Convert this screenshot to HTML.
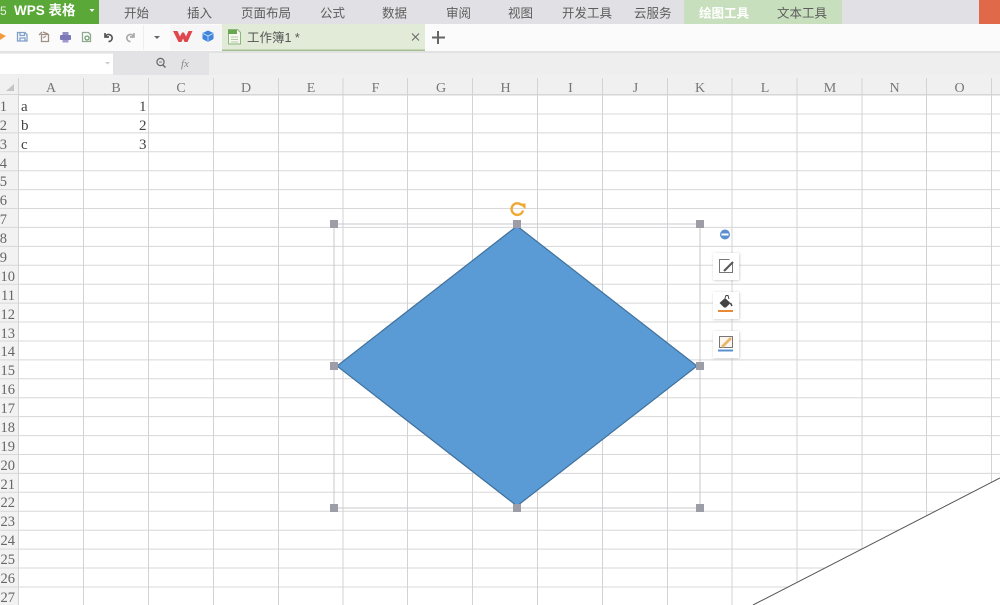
<!DOCTYPE html>
<html>
<head>
<meta charset="utf-8">
<style>
html,body{margin:0;padding:0;background:#fff;width:1000px;height:605px;overflow:hidden}
svg{display:block;filter:blur(.3px)}
.cn{font-family:"Liberation Sans","Noto Sans CJK SC",sans-serif;font-size:12.5px;fill:#5c5c5c}
.h{font-family:"Liberation Serif",serif;font-size:14px;fill:#777;text-anchor:middle}
.c{font-family:"Liberation Serif",serif;font-size:15px;fill:#444}
.r{font-family:"Liberation Serif",serif;font-size:14.5px;fill:#666;text-anchor:end}
</style>
</head>
<body>
<svg width="1000" height="605" viewBox="0 0 1000 605" xmlns="http://www.w3.org/2000/svg">
<defs>
<filter id="sh" x="-30%" y="-30%" width="160%" height="160%"><feDropShadow dx="0.500" dy="0.500" stdDeviation="1.300" flood-color="#000" flood-opacity=".22"/></filter>
</defs>
<rect width="1000" height="605" fill="#fff"/>
<!-- top bar -->
<rect width="1000" height="24" fill="#e1e1e5"/>
<rect width="99" height="24" fill="#5aa838"/>
<text x="0" y="15" font-family="Liberation Sans,sans-serif" font-size="12" fill="#e8f3e0">5</text>
<text x="14" y="15" font-family="Liberation Sans,'Noto Sans CJK SC',sans-serif" font-size="13.500" font-weight="bold" fill="#fff">WPS 表格</text>
<path d="M89.500 9h5l-2.500 3z" fill="#fff"/>
<rect x="684" y="0" width="158" height="24" fill="#c8dfbd"/>
<rect x="979" y="0" width="21" height="24" fill="#e0694a"/>
<g class="cn">
<text x="124" y="17.500">开始</text>
<text x="187" y="17.500">插入</text>
<text x="241" y="17.500">页面布局</text>
<text x="320" y="17.500">公式</text>
<text x="382" y="17.500">数据</text>
<text x="446" y="17.500">审阅</text>
<text x="508" y="17.500">视图</text>
<text x="562" y="17.500">开发工具</text>
<text x="634" y="17.500">云服务</text>
<text x="699" y="17.500" style="fill:#fff;font-weight:bold">绘图工具</text>
<text x="777" y="17.500">文本工具</text>
</g>
<!-- toolbar -->
<rect y="24" width="1000" height="27" fill="#fbfbfb"/>
<rect y="51" width="1000" height="2" fill="#e2e2e2"/>
<rect x="143" y="25" width="1" height="25" fill="#eee"/>
<rect x="170" y="25" width="52" height="25" fill="#f6f6f6"/>
<path d="M0 33l6 3-6 4z" fill="#f39a3c"/>
<g fill="none" stroke-width="1.300">
<path d="M17.500 32.500h7.500l2 2v6.500h-9.500z" stroke="#7d9fc9"/><path d="M20 32.500v3h4.500v-3M20 41v-3h5v3" stroke="#7d9fc9"/>
<path d="M41.500 34.500h7v7h-7zM39 35l3-3M43 32l5 2" stroke="#a08f88"/><path d="M43 38l3-2" stroke="#b09a90"/>
<path d="M82.500 32.500h6l2 2v7h-8z" stroke="#92a892"/><circle cx="87" cy="38" r="2" stroke="#6f9f70"/>
</g>
<rect x="60" y="35" width="11" height="5" rx="1" fill="#7c78b8"/><rect x="62.500" y="32" width="6" height="3" fill="#8f8cc4"/><rect x="62.500" y="40" width="6" height="2.500" fill="#9d9ad0"/>
<path d="M105 33v4h4M105.500 36.500a3.500 3.500 0 1 1 3 5" fill="none" stroke="#555" stroke-width="1.700"/>
<path d="M134 33v4h-4M133.500 36.500a3.500 3.500 0 1 0-3 5" fill="none" stroke="#aaa" stroke-width="1.700"/>
<path d="M154 36h6l-3 3z" fill="#666"/>
<path d="M173 31h4.500l2.500 5.500 2-4h2l2 4 2.500-5.500h4l-5 11h-3l-1.500-3.500-1.500 3.500h-3z" fill="#e0474c"/>
<path d="M208 30.500l5.500 2.500v6l-5.500 3-5.500-3v-6z" fill="#3f86dc"/><path d="M203 33.500l5 2.500 5-2.500M208 36v5.500" stroke="#d5e6f8" stroke-width=".8" fill="none"/>
<!-- tab -->
<rect x="222" y="24" width="203" height="26" fill="#e1ebd8"/>
<rect x="222" y="49.500" width="203" height="1.500" fill="#a3c08e"/>
<path d="M228.500 29.500h9l3 3v11.500h-12z" fill="#f6f8f0" stroke="#8bb57a"/>
<rect x="228" y="30" width="9" height="4" fill="#6aa84f"/>
<path d="M231 37h7M231 39.500h7M231 42h7" stroke="#9bb98c" stroke-width=".8"/>
<text x="247" y="42" font-family="Liberation Sans,'Noto Sans CJK SC',sans-serif" font-size="12.500" fill="#555">工作簿1 *</text>
<path d="M412 33.500l7 7M419 33.500l-7 7" stroke="#666" stroke-width="1"/>
<path d="M438 31v13M432 37.500h13" stroke="#666" stroke-width="2"/>
<!-- formula bar -->
<rect y="53" width="1000" height="22" fill="#eeeeee"/>
<rect y="54" width="113" height="20" fill="#fff"/>
<rect x="113" y="53" width="96" height="22" fill="#e3e3e6"/>
<path d="M105 62h5l-2.500 2.500z" fill="#ccc"/>
<circle cx="160.500" cy="62" r="3.600" fill="none" stroke="#666" stroke-width="1.200"/><path d="M163 65l2.500 2.500" stroke="#666" stroke-width="1.400"/><path d="M159 62h3" stroke="#666" stroke-width=".8"/>
<text x="181" y="67" font-family="Liberation Serif,serif" font-style="italic" font-size="11" fill="#888">fx</text>
<!-- column header -->
<rect y="75" width="1000" height="20" fill="#f0f0f0"/>
<rect y="94" width="1000" height="1.500" fill="#d6d6d6"/>
<path d="M14 84v7h-8z" fill="#c4c4c4"/>
<!-- row header -->
<rect y="95" width="18" height="510" fill="#f2f2f2"/>
<!-- gridlines -->
<g stroke="#d8d8da" stroke-width="1" id="rows">
<path d="M0 114H1000M0 132.900H1000M0 151.800H1000M0 170.700H1000M0 189.600H1000M0 208.500H1000M0 227.400H1000M0 246.400H1000M0 265.300H1000M0 284.200H1000M0 303.100H1000M0 322H1000M0 341H1000M0 359.900H1000M0 378.800H1000M0 397.700H1000M0 416.600H1000M0 435.600H1000M0 454.500H1000M0 473.400H1000M0 492.300H1000M0 511.200H1000M0 530.200H1000M0 549.100H1000M0 568H1000M0 587H1000"/>
</g>
<g stroke="#d3d3d5" stroke-width="1">
<path d="M18.500 78V605M83.500 78V605M148.500 78V605M213.500 78V605M278.500 78V605M343 78V605M407.500 78V605M472.500 78V605M537.500 78V605M602.500 78V605M667.500 78V605M732 78V605M797 78V605M862 78V605M926.500 78V605M991.500 78V605"/>
</g>
<!-- column labels -->
<g class="h">
<text x="51" y="92">A</text><text x="116" y="92">B</text><text x="181" y="92">C</text><text x="246" y="92">D</text><text x="311" y="92">E</text><text x="375.500" y="92">F</text><text x="441" y="92">G</text><text x="505.500" y="92">H</text><text x="570.500" y="92">I</text><text x="635.500" y="92">J</text><text x="700" y="92">K</text><text x="765" y="92">L</text><text x="830" y="92">M</text><text x="894.500" y="92">N</text><text x="959.500" y="92">O</text>
</g>
<!-- row labels -->
<g class="r">
<text x="7" y="111">1</text><text x="7" y="130">2</text><text x="7" y="149">3</text><text x="7" y="168">4</text><text x="7" y="186">5</text><text x="7" y="205">6</text><text x="7" y="224">7</text><text x="7" y="243">8</text><text x="7" y="262">9</text>
<text x="15" y="281">10</text><text x="15" y="300">11</text><text x="15" y="319">12</text><text x="15" y="338">13</text><text x="15" y="356">14</text><text x="15" y="375">15</text><text x="15" y="394">16</text><text x="15" y="413">17</text><text x="15" y="432">18</text><text x="15" y="451">19</text><text x="15" y="470">20</text><text x="15" y="489">21</text><text x="15" y="507">22</text><text x="15" y="526">23</text><text x="15" y="545">24</text><text x="15" y="564">25</text><text x="15" y="583">26</text><text x="15" y="602">27</text>
</g>
<!-- cells -->
<g class="c">
<text x="21" y="111">a</text><text x="21" y="130">b</text><text x="21" y="149">c</text>
<text x="139" y="111">1</text><text x="139" y="130">2</text><text x="139" y="149">3</text>
</g>
<!-- lower right white wedge -->
<path d="M753 605L1000 478V605z" fill="#fff"/>
<path d="M753 605L1000 478" stroke="#555" stroke-width="1" fill="none"/>
<!-- selection frame -->
<rect x="334" y="224" width="366" height="284" fill="none" stroke="#c8c8cc" stroke-width="1"/>
<!-- diamond -->
<path d="M517 226L697 366L517 506L337 366Z" fill="#5b9bd5" stroke="#41719c" stroke-width="1.200"/>
<!-- handles -->
<g fill="#9d9da8">
<rect x="330" y="220" width="8" height="8"/><rect x="513" y="220" width="8" height="8"/><rect x="696" y="220" width="8" height="8"/>
<rect x="330" y="362" width="8" height="8"/><rect x="696" y="362" width="8" height="8"/>
<rect x="330" y="504" width="8" height="8"/><rect x="513" y="504" width="8" height="8"/><rect x="696" y="504" width="8" height="8"/>
</g>
<!-- rotate handle -->
<path d="M521.500 205a5.800 5.800 0 1 0 1.500 5.500" fill="none" stroke="#f0a733" stroke-width="2.400"/>
<path d="M518.500 203.500h7v5.500z" fill="#f0a733"/>
<!-- minus -->
<circle cx="725" cy="234.500" r="5" fill="#5b8fd0"/>
<rect x="721.500" y="233.500" width="7" height="2" fill="#fff"/>
<!-- side buttons -->
<g fill="#fff" filter="url(#sh)">
<rect x="713" y="253" width="26" height="27"/>
<rect x="713" y="292" width="26" height="27"/>
<rect x="713" y="331" width="26" height="27"/>
</g>
<path d="M732.500 262v10.500h-13v-13h10" fill="none" stroke="#777"/>
<path d="M724 271l9-9" stroke="#555" stroke-width="2"/>
<path d="M719.500 303l5.500-5 5.500 5-4.500 4.500h-2z" fill="#444"/><path d="M725 298l1-2.500h2l1 3.500" fill="none" stroke="#444"/><path d="M730.500 303l1.500 3" stroke="#444" stroke-width="1.500"/>
<rect x="718" y="310" width="15" height="2" fill="#e88a35"/>
<rect x="719.500" y="336.500" width="13" height="11" fill="#fbf7ef" stroke="#777"/>
<path d="M722 347l9-9" stroke="#e9b56e" stroke-width="2.800"/>
<rect x="718" y="349.500" width="15" height="2" fill="#5b8fd0"/>
</svg>
</body>
</html>
